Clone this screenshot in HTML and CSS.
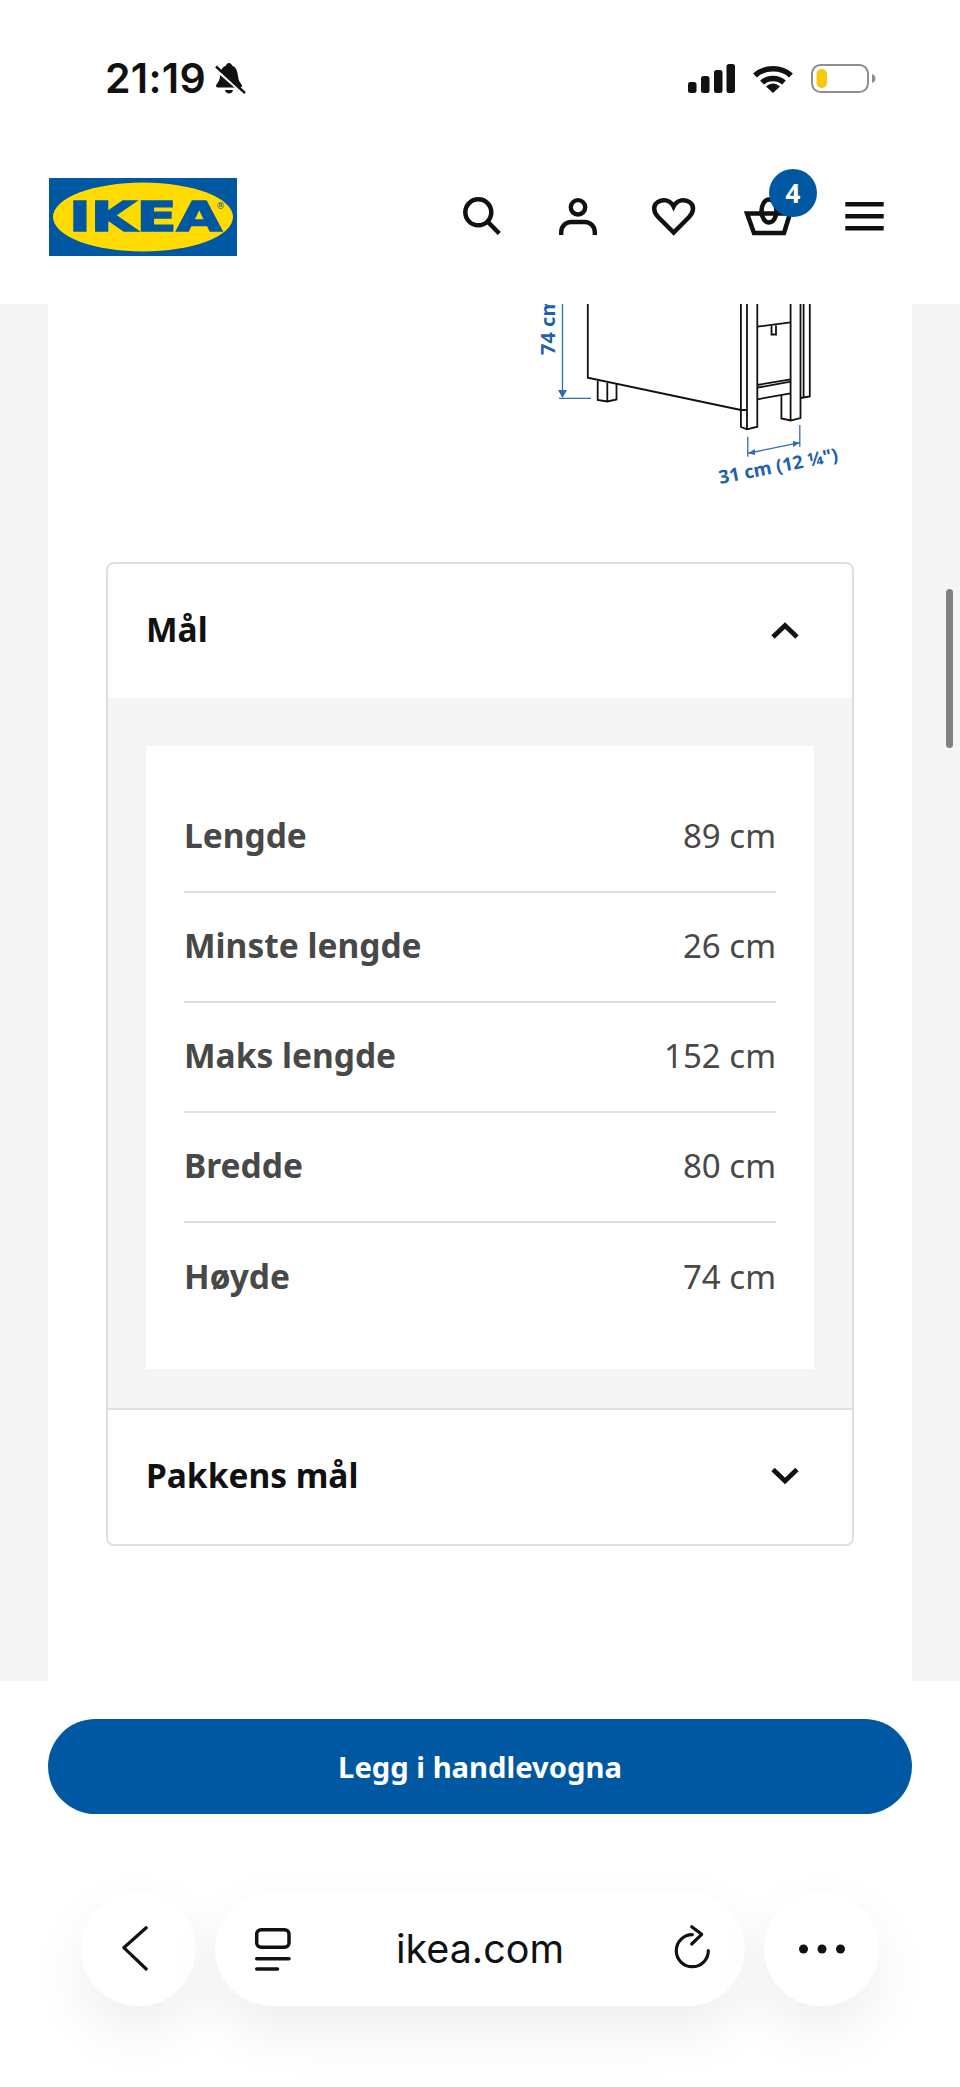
FILE: index.html
```html
<!DOCTYPE html>
<html lang="nb">
<head>
  <meta charset="UTF-8" />
  <title>IKEA</title>
  <meta name="viewport" content="width=device-width, initial-scale=1.0" />
  <link rel="stylesheet" href="styles.css">
</head>
<body>
  <div class="status-bar">
    <div class="status-left">
      <span class="time">21:19</span>
      <svg class="bell" width="32" height="32" viewBox="0 0 32 32">
        <path d="M15 1c-1.600 0-2.600 1-3 2.400C8 4.800 6.500 8.500 6.200 13c-.3 4.500-1.500 7-3.700 9.500-1 1.200-.5 3 1.500 3h22c2 0 2.500-1.800 1.500-3-2.200-2.500-3.200-5-3.700-9.500-.4-4.500-2-8.200-5.800-9.600C17.600 2 16.600 1 15 1z" fill="#111"/>
        <path d="M11 28h8c-.5 2.400-2.200 3.500-4 3.500s-3.500-1.100-4-3.500z" fill="#111"/>
        <path d="M1 6l30 26" stroke="#fff" stroke-width="4"/>
        <path d="M2 4.500l29 26.500" stroke="#111" stroke-width="2.400"/>
      </svg>
    </div>
    <div class="status-right">
      <svg width="47" height="29" viewBox="0 0 47 29" fill="#111">
        <rect x="0" y="18" width="8.500" height="11" rx="2.500"/>
        <rect x="13" y="12" width="8.500" height="17" rx="2.500"/>
        <rect x="26" y="6" width="8.500" height="23" rx="2.500"/>
        <rect x="38.500" y="0" width="8.500" height="29" rx="2.500"/>
      </svg>
      <svg width="40" height="29" viewBox="0 0 40 29" fill="none" stroke="#111" stroke-width="5.500">
        <path d="M2 11.500C11.500 2.500 28.500 2.500 38 11.500"/>
        <path d="M9 18.500C15 13 25 13 31 18.500"/>
        <path d="M13 22.500Q20 16.500 27 22.500L20 29Z" fill="#111" stroke="none"/>
      </svg>
      <svg width="65" height="29" viewBox="0 0 65 29">
        <rect x="1" y="1" width="56" height="27" rx="8.500" fill="none" stroke="#8e8e8e" stroke-width="2"/>
        <rect x="5.500" y="5" width="10.500" height="19" rx="5" fill="#f9c80e"/>
        <path d="M61 10c2.500 1 3.500 2.500 3.500 4.500S63.500 18 61 19z" fill="#8e8e8e"/>
      </svg>
    </div>
  </div>

  <header class="site-header">
    <svg class="logo" width="188" height="78" viewBox="0 0 188 78">
      <rect width="188" height="78" fill="#0058a3"/>
      <ellipse cx="94" cy="39" rx="90" ry="34.500" fill="#ffdb00"/>
      <text class="logo-text" x="20" y="53" textLength="153" lengthAdjust="spacingAndGlyphs">IKEA</text>
      <text class="logo-reg" x="167" y="31">®</text>
    </svg>
    <nav class="header-icons">
      <svg width="48" height="48" viewBox="-2 0 48 48" fill="none" stroke="#111" stroke-width="4.500">
        <circle cx="20.300" cy="20.300" r="13"/>
        <path d="M29.500 29.500L41.300 41.500"/>
      </svg>
      <svg width="48" height="48" viewBox="-2 0 48 48" fill="none" stroke="#111" stroke-width="4.400">
        <circle cx="24" cy="15.300" r="7.200"/>
        <path d="M7.200 43v-3a10 10 0 0 1 10-10h13.600a10 10 0 0 1 10 10v3"/>
      </svg>
      <svg width="48" height="48" viewBox="-1.600 0 48 48" fill="none" stroke="#111" stroke-width="4.500">
        <path d="M24 40.500L8.500 25C3.500 20 3.500 13.500 7.500 10.500 12.500 6.500 20.500 7.500 24 14.500 27.500 7.500 35.500 6.500 40.500 10.500 44.500 13.500 44.500 20 39.500 25Z"/>
      </svg>
      <div class="cart">
        <svg width="48" height="48" viewBox="0 0 48 48" fill="none" stroke="#111" stroke-width="4.500">
          <ellipse cx="25" cy="19" rx="7.500" ry="11.500"/>
          <path d="M3 21.500H46L40 41H10Z"/>
        </svg>
        <span class="badge">4</span>
      </div>
      <svg width="48" height="48" viewBox="0 0 48 48" fill="none" stroke="#111" stroke-width="4.500">
        <path d="M5.300 12.300H43.700M5.300 24.300H43.700M5.300 36.300H43.700"/>
      </svg>
    </nav>
  </header>

  <main class="page">
    <div class="sheet">
      <!-- product drawing, viewBox uses screen coordinates -->
      <svg class="drawing" width="864" height="258" viewBox="48 304 864 258" fill="none">
        <g stroke="#111" stroke-width="1.800">
          <path d="M587.800 304V377.700L740.900 410"/>
          <path d="M597.700 381V400L607.300 401.500L616.500 399.500V384M607.300 383V401.500"/>
          <path d="M740.900 304V427L747 429.300L757.300 426.700V304M747 304V429M740.900 410H747"/>
          <path d="M790.600 304V395M800.500 304V418L790.600 420.500L781.400 418.500V395M790.600 395V420"/>
          <path d="M800.500 398L809.800 396.500V304M803.600 304V398"/>
          <path d="M757.300 326.700L790.600 322.300M771.500 326V334.500H776V325.500"/>
          <path d="M757.300 385L790.600 379.300M757.300 387.700L790.600 381.700M757.300 399.300L790.600 393.300"/>
        </g>
        <g stroke="#2f6db5" stroke-width="1.300">
          <path d="M562.500 304V397M559 398.300H591"/>
          <path d="M747.800 436.700V456.700M799.800 425V446.700M747.800 453.300L799.800 442.700"/>
        </g>
        <path d="M558 390H567L562.500 398Z" fill="#2f6db5"/>
        <path d="M747.800 453.300L755 449V455ZM799.800 442.700L793 441V447Z" fill="#2f6db5"/>
        <text class="dim" transform="translate(555 355) rotate(-90)">74 cm</text>
        <text class="dim dim-small" transform="translate(720 484) rotate(-11)">31 cm (12 ¼")</text>
      </svg>

      <section class="accordion">
        <div class="acc-head">
          <span>Mål</span>
          <svg width="36" height="36" viewBox="0 0 36 36" fill="none" stroke="#111" stroke-width="4.800">
            <path d="M6 24L18 12.500L30 24"/>
          </svg>
        </div>
        <div class="acc-body">
          <div class="dims">
            <div class="dim-row"><strong>Lengde</strong><span>89 cm</span></div>
            <div class="dim-row"><strong>Minste lengde</strong><span>26 cm</span></div>
            <div class="dim-row"><strong>Maks lengde</strong><span>152 cm</span></div>
            <div class="dim-row"><strong>Bredde</strong><span>80 cm</span></div>
            <div class="dim-row"><strong>Høyde</strong><span>74 cm</span></div>
          </div>
        </div>
        <div class="acc-head acc-closed">
          <span>Pakkens mål</span>
          <svg width="36" height="36" viewBox="0 0 36 36" fill="none" stroke="#111" stroke-width="4.800">
            <path d="M6 10.500L18 22L30 10.500"/>
          </svg>
        </div>
      </section>
    </div>
    <div class="scrollbar"></div>
  </main>

  <div class="buy-bar">
    <button class="buy-btn">Legg i handlevogna</button>
  </div>

  <div class="browser-bar">
    <div class="pill pill-round">
      <svg width="44" height="52" viewBox="0 0 44 52" fill="none" stroke="#111" stroke-width="3.200" stroke-linecap="round" stroke-linejoin="round">
        <path d="M29.200 4.700L6.800 24.700L29.200 46"/>
      </svg>
    </div>
    <div class="pill pill-address">
      <svg width="52" height="52" viewBox="0 0 52 52" fill="none" stroke="#111" stroke-width="3.500" stroke-linecap="round">
        <rect x="13.700" y="6.700" width="32.300" height="17.600" rx="4.500"/>
        <path d="M13.700 35.700H46M13.700 46H34.500"/>
      </svg>
      <span class="url">ikea.com</span>
      <svg width="52" height="52" viewBox="0 0 52 52" fill="none" stroke="#111" stroke-width="3.200" stroke-linecap="round" stroke-linejoin="round">
        <path d="M43.300 27.700A16 16 0 1 1 27.300 11.700"/>
        <path d="M26.700 3.700L36.700 11.300L26.700 21"/>
      </svg>
    </div>
    <div class="pill pill-round">
      <svg width="46" height="12" viewBox="0 0 46 12" fill="#111">
        <circle cx="4.500" cy="6" r="4.500"/>
        <circle cx="23" cy="6" r="4.500"/>
        <circle cx="41.500" cy="6" r="4.500"/>
      </svg>
    </div>
  </div>
</body>
</html>
```

FILE: styles.css
```css
body {
  font-family: 'Noto Sans', sans-serif;
  margin: 0;
  padding: 0;
  width: 960px;
  height: 2087px;
  overflow: hidden;
  background: #fff;
  color: #111;
}

svg {
  display: block;
  flex: none;
}

.status-bar {
  height: 112px;
  box-sizing: border-box;
  padding: 44px 84px 0 105px;
  display: flex;
  justify-content: space-between;
  align-items: center;
}

.status-left {
  display: flex;
  align-items: center;
  gap: 8px;
}

.time {
  font-family: Inter, sans-serif;
  font-size: 41px;
  font-weight: 600;
  line-height: 44px;
  letter-spacing: 0.3px;
}

.status-right {
  display: flex;
  align-items: center;
  gap: 18px;
}

.site-header {
  height: 192px;
  box-sizing: border-box;
  padding: 18px 72px 0 49px;
  display: flex;
  justify-content: space-between;
  align-items: center;
}

.logo-text {
  font-family: 'DejaVu Sans', sans-serif;
  font-size: 40px;
  font-weight: 700;
  fill: #0058a3;
  stroke: #0058a3;
  stroke-width: 1.5;
}

.logo-reg {
  font-family: 'DejaVu Sans', sans-serif;
  font-size: 9px;
  fill: #0058a3;
}

.header-icons {
  display: flex;
  gap: 48px;
  margin-bottom: 2px;
}

.cart {
  position: relative;
}

.badge {
  position: absolute;
  left: 25px;
  top: -23px;
  width: 48px;
  height: 48px;
  border-radius: 50%;
  background: #0058a3;
  color: #fff;
  font-size: 26px;
  font-weight: 700;
  line-height: 48px;
  text-align: center;
}

.page {
  position: relative;
  height: 1377px;
  padding: 0 48px;
  background: #f5f5f5;
  overflow: hidden;
}

.sheet {
  height: 100%;
  background: #fff;
}

.drawing .dim {
  font-family: 'Noto Sans', sans-serif;
  font-size: 20px;
  font-weight: 700;
  fill: #1f5fb0;
}

.drawing .dim-small {
  font-size: 18.5px;
}

.accordion {
  margin: 0 58px;
  border: 2px solid #dfdfdf;
  border-radius: 8px;
  overflow: hidden;
}

.acc-head {
  height: 134px;
  box-sizing: border-box;
  padding: 0 38px;
  display: flex;
  justify-content: space-between;
  align-items: center;
  font-size: 33.5px;
  font-weight: 700;
}

.acc-head span {
  margin-bottom: 5px;
}

.acc-closed {
  height: 136px;
  border-top: 2px solid #dfdfdf;
}

.acc-head svg {
  margin-right: 11px;
}

.acc-body {
  background: #f5f5f5;
  padding: 48px 38px 39px;
}

.dims {
  background: #fff;
  padding: 37px 38px 36px 38px;
}

.dim-row {
  height: 110px;
  box-sizing: border-box;
  padding-bottom: 4px;
  border-bottom: 2px solid #dfdfdf;
  display: flex;
  justify-content: space-between;
  align-items: center;
  font-size: 33.5px;
  color: #484848;
}

.dim-row:last-child {
  border-bottom: none;
}

.dim-row span {
  font-size: 33px;
  font-weight: 400;
}

.scrollbar {
  position: absolute;
  right: 7px;
  top: 285px;
  width: 7px;
  height: 159px;
  border-radius: 4px;
  background: #808080;
}

.buy-bar {
  height: 211px;
  box-sizing: border-box;
  padding: 38px 48px 0;
}

.buy-btn {
  display: block;
  width: 100%;
  height: 95px;
  border: none;
  border-radius: 48px;
  background: #0058a3;
  color: #fff;
  font-family: 'Noto Sans', sans-serif;
  font-size: 29.2px;
  font-weight: 700;
}

.browser-bar {
  padding-left: 81px;
  display: flex;
  gap: 19px;
}

.pill {
  height: 114px;
  border-radius: 57px;
  background: #fff;
  box-shadow: 0 24px 60px rgba(0, 0, 0, 0.07);
  display: flex;
  align-items: center;
  justify-content: center;
}

.pill-round {
  width: 115px;
}

.pill-address {
  width: 530px;
  box-sizing: border-box;
  padding: 0 28px;
  justify-content: space-between;
}

.url {
  font-family: Inter, sans-serif;
  font-size: 39.5px;
  font-weight: 400;
}
```
